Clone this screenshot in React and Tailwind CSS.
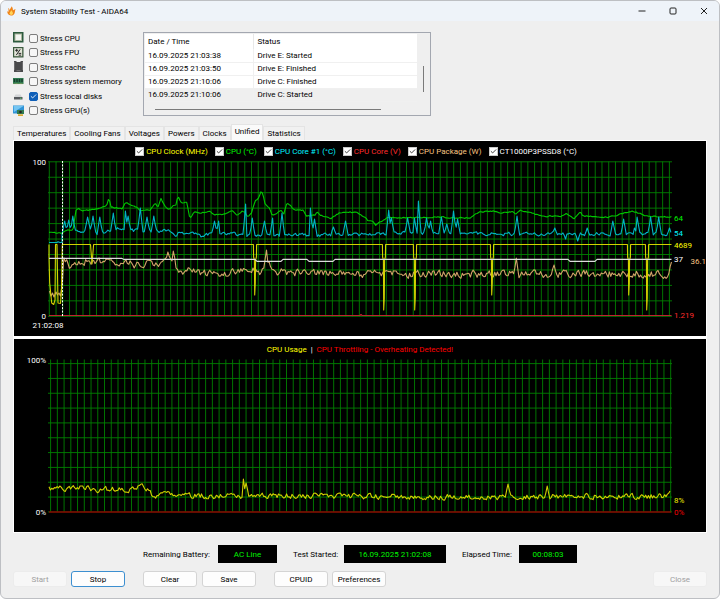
import { Check } from 'lucide-react';

const STEP = 1.35;

const stressOptions = [
  { id: 'cpu', label: 'Stress CPU', checked: false },
  { id: 'fpu', label: 'Stress FPU', checked: false },
  { id: 'cache', label: 'Stress cache', checked: false },
  { id: 'memory', label: 'Stress system memory', checked: false },
  { id: 'disks', label: 'Stress local disks', checked: true },
  { id: 'gpu', label: 'Stress GPU(s)', checked: false },
];

const logRows = [
  { time: '16.09.2025 21:03:38', status: 'Drive E: Started' },
  { time: '16.09.2025 21:03:50', status: 'Drive E: Finished' },
  { time: '16.09.2025 21:10:06', status: 'Drive C: Finished' },
  { time: '16.09.2025 21:10:06', status: 'Drive C: Started', active: true },
];

const tabs = ['Temperatures', 'Cooling Fans', 'Voltages', 'Powers', 'Clocks', 'Unified', 'Statistics'];

const legend = [
  { label: 'CPU Clock (MHz)', color: 'text-[#ffff00]' },
  { label: 'CPU (°C)', color: 'text-[#00f400]' },
  { label: 'CPU Core #1 (°C)', color: 'text-[#00f4ff]' },
  { label: 'CPU Core (V)', color: 'text-[#ff2c2c]' },
  { label: 'CPU Package (W)', color: 'text-[#f8c480]' },
  { label: 'CT1000P3PSSD8 (°C)', color: 'text-[#ffffff]' },
];

// key points are [x, y] in chart units
const cpuTemp = [
  [49, 233], [62, 233], [65, 230], [73, 230], [76, 211], [78, 208], [82, 211], [90, 210], [102, 208], [107, 205],
  [109, 198], [111, 207], [122, 209], [125, 203], [135, 206], [140, 210], [150, 210], [155, 203], [158, 207],
  [161, 199], [165, 206], [169, 209], [173, 206], [176, 205], [178, 196], [181, 202], [187, 203], [190, 219],
  [194, 212], [200, 213], [210, 212], [213, 215], [226, 214], [232, 210], [237, 216], [242, 211], [245, 212],
  [248, 217], [252, 212], [255, 201], [258, 199], [261, 192], [263, 193], [265, 204], [269, 207], [272, 215],
  [281, 211], [284, 214], [287, 203], [295, 210], [303, 210], [306, 216], [315, 215], [317, 211], [320, 216],
  [331, 218], [339, 213], [356, 212], [365, 217], [368, 221], [373, 221], [376, 225], [383, 220], [388, 218],
  [440, 217], [463, 218], [470, 218], [480, 212], [487, 211], [495, 211], [499, 213], [513, 212], [516, 214],
  [520, 210], [530, 212], [540, 216], [561, 216], [566, 214], [574, 219], [580, 212], [583, 216], [608, 217],
  [626, 213], [633, 211], [646, 216], [663, 217], [672, 217],
];

const coreTemp = [
  [62, 236], [65, 232], [90, 231], [98, 234], [110, 231], [120, 228], [128, 230], [140, 231], [155, 231],
  [170, 231], [176, 236], [178, 233], [195, 233], [202, 237], [205, 234], [235, 234], [244, 236], [285, 235],
  [310, 235], [350, 235], [380, 234], [405, 233], [450, 233], [500, 234], [560, 234], [672, 234],
];
const corePeaks = [
  [65, 221], [69, 220], [73, 216], [88, 217], [93, 216], [100, 217], [113, 213], [126, 211], [128, 216],
  [140, 208], [147, 217], [154, 216], [215, 221], [218, 221], [245, 204], [252, 218], [265, 221], [272, 218],
  [282, 213], [311, 208], [314, 219], [333, 227], [346, 221], [389, 210], [392, 218], [408, 218], [415, 218],
  [419, 201], [427, 218], [431, 221], [441, 217], [447, 224], [453, 211], [458, 219], [517, 216], [555, 228],
  [565, 239], [578, 241], [587, 228], [613, 221], [624, 219], [635, 228], [637, 217], [651, 217], [659, 217],
  [670, 228],
];

const packagePower = [
  [64, 261], [66, 259], [69, 265], [75, 261], [110, 261], [130, 261], [135, 268], [140, 264], [155, 262],
  [165, 262], [174, 261], [177, 272], [181, 275], [190, 271], [200, 273], [240, 273], [246, 268], [254, 268],
  [258, 274], [264, 268], [272, 271], [290, 273], [420, 274], [560, 274], [669, 274], [672, 261],
];
const packagePeaks = [[168, 252], [174, 251], [266, 250], [269, 262], [516, 258], [554, 265]];

const usage = [
  [49, 488], [60, 488], [75, 488], [86, 487], [100, 490], [112, 489], [125, 489], [135, 490], [138, 487],
  [144, 487], [150, 490], [152, 497], [160, 495], [240, 496], [250, 495], [330, 496], [450, 497], [671, 496],
];
const usagePeaks = [[244, 479], [246, 483], [508, 484], [547, 486], [670, 491]];

const clockDips = [
  [255, 295], [384, 310], [415, 310], [492, 295], [629, 295], [647, 310],
];

const valueAt = (points, x) => {
  const i = points.findIndex((p) => p[0] >= x);
  if (i <= 0) return points[i < 0 ? points.length - 1 : 0][1];
  const [x0, y0] = points[i - 1];
  const [x1, y1] = points[i];
  return y0 + ((y1 - y0) * (x - x0)) / (x1 - x0);
};

// noise drifts between samples, so the line wanders instead of buzzing
const buildLine = (points, peaks, amplitude, seed) => {
  let state = seed;
  let noise = 0;
  const line = [];
  const end = points[points.length - 1][0];
  for (let x = points[0][0]; x <= end; x += STEP) {
    state = (state * 16807) % 2147483647;
    noise = noise * 0.4 + (state / 2147483647 - 0.5) * 2 * amplitude;
    let y = valueAt(points, x) + noise;
    const peak = peaks.find((p) => Math.abs(p[0] - x) <= 1.9);
    if (peak) {
      const weight = Math.abs(peak[0] - x) <= STEP / 2 ? 1 : 0.45;
      y += (peak[1] - y) * weight;
    }
    line.push(`${x.toFixed(1)},${y.toFixed(1)}`);
  }
  return line.join(' ');
};

const clockLine = () => {
  const line = ['49,244.5 49,257 49.7,283 51.7,303 53.7,304.5 55,300 55.5,244.5 57,244.5 58,303 60.5,303.5 61.5,290 62.3,244.5'];
  line.push('90.5,244.5 91.5,257 92,264 92.6,257 93.6,244.5');
  clockDips.forEach(([x, y]) => {
    line.push(`${x - 1.6},244.5 ${x - 1.4},257 ${x - 0.6},260 ${x - 0.3},${y} ${x + 0.3},${y - 12} ${x + 0.6},260 ${x + 1.4},257 ${x + 1.6},244.5`);
  });
  line.push('671.5,244.5');
  return line.join(' ');
};

const Grid = ({ x, top, bottom, firstRow, rowGap, rows }) => (
  <g stroke="#008000" strokeWidth="0.9">
    {Array.from({ length: 93 }, (_, i) => (
      <line key={`v${i}`} x1={x + i * 6.74} x2={x + i * 6.74} y1={top} y2={bottom} />
    ))}
    {Array.from({ length: rows }, (_, i) => (
      <line key={`h${i}`} x1="48" x2="672" y1={firstRow + i * rowGap} y2={firstRow + i * rowGap} />
    ))}
  </g>
);

const StressIcon = ({ id }) => (
  <svg viewBox="0 0 12 12" className="w-3 h-3 shrink-0">
    {id === 'cpu' && (
      <>
        <rect x="0" y="0" width="10.5" height="10.5" fill="#2c5a3e" />
        <rect x="1.5" y="1.5" width="7.5" height="7.5" fill="#a9b59c" />
        <rect x="2.5" y="2.5" width="5.5" height="5.5" fill="#f2f4f0" />
      </>
    )}
    {id === 'fpu' && (
      <>
        <rect x="0" y="0" width="10.5" height="10.5" fill="#3c5a3e" />
        <rect x="1.2" y="1.2" width="8" height="8" fill="#e2e4d8" />
        <path d="M2.2 3.3h3M3.7 1.8v3M7.2 2.3 3.3 8.1M5.6 6.4h2.6M5.6 8.1h2.6" stroke="#222" strokeWidth="1" />
      </>
    )}
    {id === 'cache' && (
      <>
        <path d="M1 0h2l1 1h3l1-1h2v11h-9z" fill="#4a4a4c" />
        <path d="M1 2h1M1 4h1M1 6h1M1 8h1M9 2h1M9 4h1M9 6h1M9 8h1" stroke="#bbb" strokeWidth="0.6" />
        <path d="M3.5 9.7h4" stroke="#888" strokeWidth="0.8" />
      </>
    )}
    {id === 'memory' && (
      <>
        <rect x="0" y="2" width="10.5" height="6" fill="#2f7a50" />
        <path d="M1.5 3v3M4 3v3M6.5 3v3M9 3v3" stroke="#16392a" strokeWidth="1.4" />
        <path d="M0.5 7.7h9.5" stroke="#b5b36a" strokeWidth="0.7" strokeDasharray="0.8 0.5" />
      </>
    )}
    {id === 'disks' && (
      <>
        <path d="M2.5 4.5h5l1.5 2.5H1z" fill="#d2d4d6" />
        <rect x="1" y="7" width="8.5" height="2.5" fill="#55585c" />
        <rect x="7" y="7.8" width="1.4" height="0.9" fill="#4bd06a" />
      </>
    )}
    {id === 'gpu' && (
      <>
        <rect x="0" y="0.5" width="11" height="8" fill="#2f93d6" />
        <path d="M0.5 1h10L1 7z" fill="#74c5f2" />
        <rect x="4" y="5" width="7" height="4" fill="#2f7a50" />
        <circle cx="7.5" cy="7" r="1.3" fill="#222" />
        <rect x="5" y="9.3" width="5" height="1.7" fill="#d9a92e" />
      </>
    )}
  </svg>
);

const CheckBox = ({ label, checked, boxClass, markClass, textClass }) => (
  <label className="flex items-center gap-[2px] whitespace-nowrap">
    <span className="relative w-[9px] h-[9px] shrink-0">
      <input
        type="checkbox"
        defaultChecked={checked}
        className={`peer block appearance-none w-[9px] h-[9px] border ${boxClass}`}
      />
      <Check strokeWidth={3} className={`hidden peer-checked:block absolute left-px top-px w-[7px] h-[7px] pointer-events-none ${markClass}`} />
    </span>
    <span className={textClass}>{label}</span>
  </label>
);

const ActionButton = ({ children, disabled, primary }) => (
  <button
    type="button"
    disabled={disabled}
    className={`w-[54px] h-4 rounded-[3px] border text-center whitespace-nowrap ${
      disabled
        ? 'bg-[#f7f7f7] border-[#ececec] text-[#a0a0a0]'
        : primary
          ? 'bg-[#fdfdfd] border-[#3c8fd0] text-black'
          : 'bg-[#fdfdfd] border-[#d4d4d4] text-black'
    }`}
  >
    {children}
  </button>
);

const Readout = ({ label, value, labelClass, boxClass }) => (
  <div className="flex items-center gap-2">
    <span className={`whitespace-nowrap ${labelClass}`}>{label}</span>
    <output className={`flex items-center justify-center h-[18px] bg-black text-[#00f400] ${boxClass}`}>{value}</output>
  </div>
);

const SensorChart = () => (
  <section className="bg-black">
    <div className="flex items-center justify-center gap-[7px] h-[17px] pt-[3px] pr-2">
      {legend.map((item) => (
        <CheckBox
          key={item.label}
          label={item.label}
          checked
          boxClass="bg-white border-[#c8c8c8]"
          markClass="text-[#222]"
          textClass={item.color}
        />
      ))}
    </div>
    <svg viewBox="14 158 692 178" className="block w-full overflow-visible" fontSize="8" fill="none">
      <Grid x={49.3} top={161.5} bottom={316.5} firstRow={161.8} rowGap={15.45} rows={11} />
      <g strokeWidth="1.1" strokeLinejoin="round">
        <polyline points="49,315.5 360,315.5 361,314.5 362,315.5 671.5,315.5" stroke="#c02030" />
        <polyline points={buildLine(cpuTemp, [], 0.6, 77)} stroke="#00c800" />
        <polyline points={`49,242.5 57,242.5 58,241.8 60,242.5 62,242.5 ${buildLine(coreTemp, corePeaks, 1.5, 913)}`} stroke="#00b4c4" />
        <polyline
          points={`49.5,291 51,296 52.5,293 54,297 56,292 57.5,295 59,293 60.5,296 62.5,281 63.5,262 ${buildLine(packagePower, packagePeaks, 3.4, 4242)}`}
          stroke="#d0a468"
        />
        <polyline points={clockLine()} stroke="#d2d200" />
        <polyline
          points="49,258.4 122,258.4 124,259.4 255,259.4 257,261.4 281,261.4 283,259.4 307,259.4 309,261.4 333,261.4 335,259.4 568,259.4 570,261.4 595,261.4 597,259.4 671.5,259.4"
          stroke="#dcdcdc"
        />
      </g>
      <line x1="62.5" x2="62.5" y1="161" y2="316" stroke="#fff" strokeDasharray="2 1.4" />
      <g fill="#fff">
        <text x="46" y="165" textAnchor="end">100</text>
        <text x="46" y="319" textAnchor="end">0</text>
        <text x="48" y="328" textAnchor="middle">21:02:08</text>
        <text x="674" y="262">37</text>
      </g>
      <text x="674" y="221" fill="#00f400">64</text>
      <text x="674" y="236" fill="#00f4ff">54</text>
      <text x="674" y="248" fill="#ffff00">4689</text>
      <text x="706" y="264" textAnchor="end" fill="#f8c480">36.1</text>
      <text x="674" y="318" fill="#ff2c2c">1.219</text>
    </svg>
  </section>
);

const UsageChart = () => (
  <section className="bg-black">
    <div className="flex items-center justify-center gap-1 h-4 pt-1">
      <span className="text-[#ffff00]">CPU Usage</span>
      <span className="text-white">|</span>
      <span className="text-[#ff0000]">CPU Throttling - Overheating Detected!</span>
    </div>
    <svg viewBox="14 355 692 177" className="block w-full overflow-visible" fontSize="8" fill="none">
      <Grid x={50.6} top={359.5} bottom={512} firstRow={363.6} rowGap={14.83} rows={11} />
      <line x1="49" x2="671" y1="512" y2="512" stroke="#8a0000" strokeWidth="1.6" />
      <polyline points={buildLine(usage, usagePeaks, 2.5, 31337)} stroke="#d0d000" strokeWidth="1.1" strokeLinejoin="round" />
      <g fill="#fff" textAnchor="end">
        <text x="46" y="363">100%</text>
        <text x="46" y="515">0%</text>
      </g>
      <text x="674" y="503" fill="#f0f000">8%</text>
      <text x="674" y="515" fill="#f00000">0%</text>
    </svg>
  </section>
);

const App = () => {
  return (
    <div className="flex flex-col min-h-screen bg-[#efefef] border border-[#bdbfc3] rounded-md overflow-hidden font-['Roboto',sans-serif] text-[8px] leading-[11px] text-black">
      {/* Title bar */}
      <header className="flex items-center justify-between h-5 pl-[6px] bg-[#eef3f9]">
        <div className="flex items-center gap-[5px]">
          <svg viewBox="0 0 10 11" className="w-[9px] h-[10px]">
            <path d="M1.2 2C2.6 3 2.8 4 3.2 5 3.2 3 4.5 2 5.4 0.2 6 2 6.8 3 6.6 5 7.5 4.4 8.3 3.6 9.6 3.6 8.6 5 9 6.4 8.4 8 7.7 9.8 6 10.8 4.4 10.6 1.4 10.4 0 8 0.4 5.6 0.8 6.2 1 6.4 1.6 6.6 1.8 5 1.8 3.6 1.2 2z" fill="#f08418" />
            <path d="M4.8 4.4C5.4 6 7 6.6 6.6 8.6 6.2 10 4.2 10.4 3.2 9.2 2.2 8 3.4 7.2 3.6 6.4 4.4 6 4.8 5.4 4.8 4.4z" fill="#ffd45a" />
          </svg>
          <h1>System Stability Test - AIDA64</h1>
        </div>
        <div className="flex">
          <button type="button" aria-label="Minimize" className="flex items-center justify-center w-[31px] h-5">
            <svg viewBox="0 0 8 8" className="w-2 h-2"><path d="M0.5 4h7" stroke="#222" /></svg>
          </button>
          <button type="button" aria-label="Maximize" className="flex items-center justify-center w-[31px] h-5">
            <svg viewBox="0 0 8 8" className="w-2 h-2"><rect x="1" y="1" width="6" height="6" rx="1" fill="none" stroke="#222" /></svg>
          </button>
          <button type="button" aria-label="Close window" className="flex items-center justify-center w-[31px] h-5">
            <svg viewBox="0 0 8 8" className="w-2 h-2"><path d="M1 1l6 6M7 1l-6 6" stroke="#222" /></svg>
          </button>
        </div>
      </header>

      <main className="flex flex-col px-3 pt-[10px]">
        {/* Stress options and event log */}
        <div className="flex items-start">
          <div className="flex flex-col justify-between w-[130px] h-[87px]">
            {stressOptions.map((option) => (
              <div key={option.id} className="flex items-center gap-1 h-[14px]">
                <StressIcon id={option.id} />
                <CheckBox
                  label={option.label}
                  checked={option.checked}
                  boxClass="rounded-[2px] bg-[#f6f6f6] border-[#7c7c7c] checked:bg-[#0f5fb8] checked:border-[#0f5fb8]"
                  markClass="text-white"
                />
              </div>
            ))}
          </div>

          <div className="w-[288px] mt-px h-[84px] border border-[#a3a7b0] bg-[#efefef] p-px">
            <div className="flex items-start h-[69px]">
              <table className="flex-1 table-fixed bg-white text-left">
                <thead>
                  <tr className="h-[15px]">
                    <th className="w-[108px] pl-[3px] font-normal border-r border-[#e8e8e8]">Date / Time</th>
                    <th className="pl-1 font-normal">Status</th>
                  </tr>
                </thead>
                <tbody>
                  {logRows.map((row, index) => (
                    <tr key={index} className={`h-[13px] border-b border-[#f0f0f0] ${row.active ? 'bg-[#efefef]' : ''}`}>
                      <td className="pl-[3px] border-r border-[#f0f0f0]">{row.time}</td>
                      <td className="pl-1">{row.status}</td>
                    </tr>
                  ))}
                </tbody>
              </table>
              <div className="w-3 flex justify-center pt-8">
                <div className="w-px h-[26px] bg-[#7a7a7a]" />
              </div>
            </div>
            <div className="flex items-center h-[13px] pl-[10px]">
              <div className="w-[226px] h-px bg-[#7a7a7a]" />
            </div>
          </div>
        </div>

        {/* Tabs */}
        <nav role="tablist" className="flex items-end h-4 mt-[6px]">
          {tabs.map((tab) => (
            <button
              key={tab}
              type="button"
              role="tab"
              aria-selected={tab === 'Unified'}
              className={`px-[3px] border border-b-0 whitespace-nowrap ${
                tab === 'Unified' ? 'h-4 bg-[#fafafa] border-[#e4e4e4] pb-[2px]' : 'h-[14px] bg-[#f1f1f1] border-[#e4e4e4]'
              }`}
            >
              {tab}
            </button>
          ))}
        </nav>

        <div className="flex flex-col gap-[3px] p-px bg-white">
          <SensorChart />
          <UsageChart />
        </div>

        {/* Test status */}
        <div className="flex gap-4 mt-3 pl-[130px]">
          <Readout label="Remaining Battery:" value="AC Line" labelClass="w-[67px]" boxClass="w-[59px]" />
          <Readout label="Test Started:" value="16.09.2025 21:02:08" labelClass="w-[43px]" boxClass="w-[102px]" />
          <Readout label="Elapsed Time:" value="00:08:03" labelClass="w-[49px]" boxClass="w-[58px]" />
        </div>

        {/* Actions */}
        <div className="flex items-center mt-2">
          <div className="flex gap-1">
            <ActionButton disabled>Start</ActionButton>
            <ActionButton primary>Stop</ActionButton>
          </div>
          <div className="flex gap-[5px] ml-[18px]">
            <ActionButton>Clear</ActionButton>
            <ActionButton>Save</ActionButton>
          </div>
          <div className="flex gap-1 ml-[18px]">
            <ActionButton>CPUID</ActionButton>
            <ActionButton>Preferences</ActionButton>
          </div>
          <div className="ml-auto">
            <ActionButton disabled>Close</ActionButton>
          </div>
        </div>
      </main>
    </div>
  );
};

export default App;
